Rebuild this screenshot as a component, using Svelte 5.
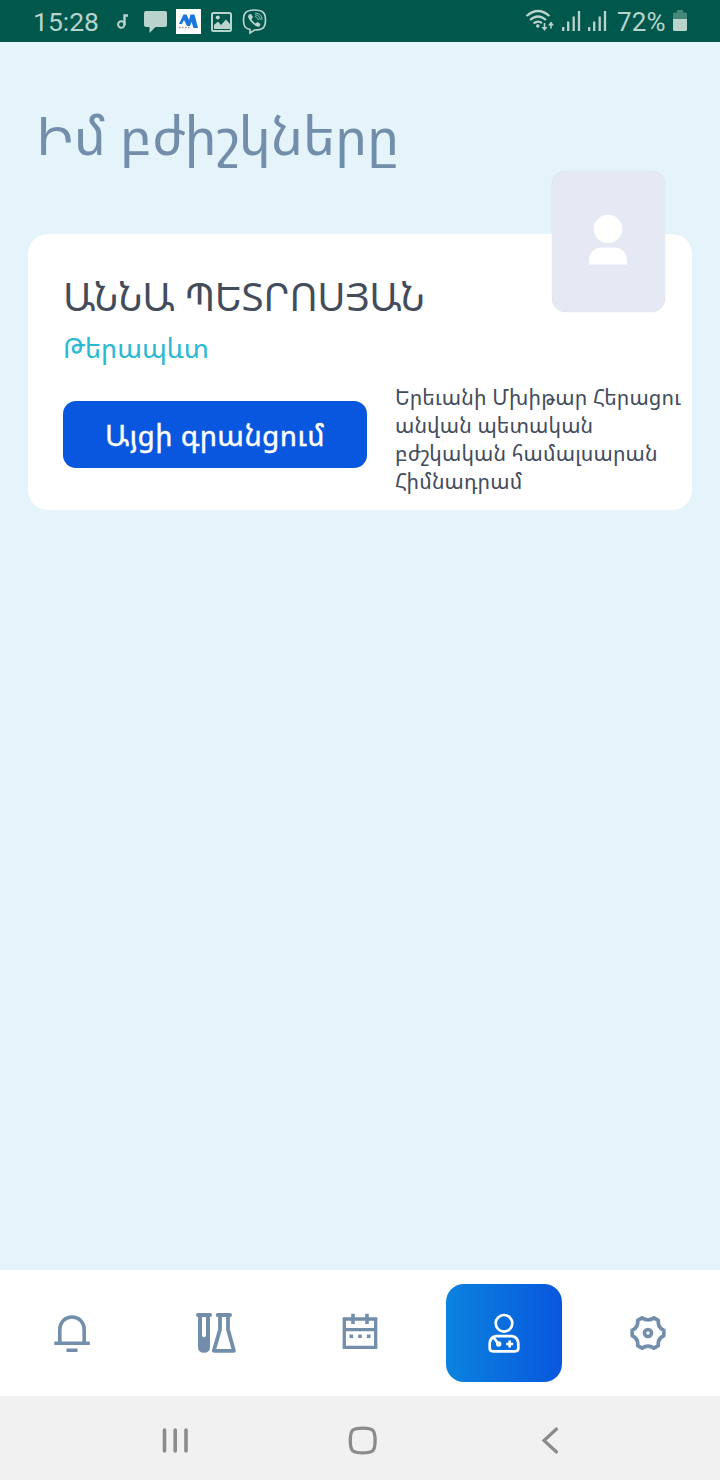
<script lang="ts">
  const title = 'Իմ բժիշկները';

  const doctor = {
    name: 'ԱՆՆԱ ՊԵՏՐՈՍՅԱՆ',
    specialty: 'Թերապևտ',
    clinic: ['Երեւանի Մխիթար Հերացու', 'անվան պետական', 'բժշկական համալսարան', 'Հիմնադրամ'],
  };

  const tabs = ['bell', 'lab', 'calendar', 'doctor', 'settings'];
  let active = $state('doctor');

  // six-toothed outline for the settings icon
  const gear =
    'M14 4.900 Q20 9 26 4.900 L30.300 7.400 Q29.500 14.500 35.800 17.300 V22.700 Q29.500 25.500 30.300 32.600 L26 35.100 Q20 31 14 35.100 L9.700 32.600 Q10.500 25.500 4.200 22.700 V17.300 Q10.500 14.500 9.700 7.400 Z';
</script>

<div class="screen">
  <header class="status">
    <span class="time">15:28</span>
    <svg class="notifications" width="152" height="42" viewBox="115 0 152 42">
      <g fill="none" stroke="#b9d3cd" stroke-width="2">
        <circle cx="121.300" cy="24.500" r="3.200" />
        <path d="M124.500 25 V15.500 H128" stroke-width="2.400" />
      </g>
      <path d="M146 11 H165 Q167 11 167 13 V25 Q167 27 165 27 H155.500 L149.500 33 V27 H146 Q144 27 144 25 V13 Q144 11 146 11 Z" fill="#b9d3cd" />
      <rect x="176" y="9" width="25" height="25" fill="#fff" />
      <path d="M179 24 L183.500 14.500 H186.500 L189 20 L190.500 14.500 H194.500 L198 28 H193.500 L191.500 22 L190 26 H187 L184 20 L182 24 Z" fill="#1976dc" />
      <path d="M179 27.500 H191" stroke="#8a9299" stroke-width="1.300" stroke-dasharray="1.500 1.500" />
      <rect x="212" y="13" width="19" height="18" rx="1.500" fill="none" stroke="#b9d3cd" stroke-width="2" />
      <circle cx="217.800" cy="17.500" r="2.100" fill="#b9d3cd" />
      <path d="M214 29 V25 L218 21.500 L221 25 L226 19.500 L230 24 V29 Z" fill="#b9d3cd" />
      <path d="M254.500 10 C263 10 265.500 13 265.500 20 C265.500 27.500 263 30 254.500 30 L250 33 V29.500 C245 28.500 243.500 26 243.500 20 C243.500 13 246 10 254.500 10 Z" fill="none" stroke="#b9d3cd" stroke-width="1.700" />
      <path d="M249 14.500 L251 14 L253 17 L251.500 19.500 Q253 22 255.500 23.500 L257.500 22 L260.500 24 L259.500 26.500 Q257 27.500 253 23.800 Q248 19 248 16 Z" fill="#b9d3cd" />
      <path d="M255 16.500 Q258 17 258.500 20 M255 14.800 Q260 15 260.300 20 M255 13 Q262 13 262 20" fill="none" stroke="#b9d3cd" stroke-width="0.800" />
    </svg>
    <svg class="signal" width="84" height="42" viewBox="524 0 84 42">
      <g fill="none" stroke="#b9d3cd" stroke-width="2.200">
        <path d="M526.500 16 Q538 6 549.500 16" />
        <path d="M530 20 Q538 13 546 20" />
        <path d="M533.500 23.500 Q538 20 542 23.200" />
      </g>
      <circle cx="537.800" cy="26" r="1.800" fill="#b9d3cd" />
      <path d="M544.500 23 V29 M551 28.500 V23" stroke="#b9d3cd" stroke-width="1.600" />
      <path d="M541.500 27 H547.500 L544.500 31 Z M548 25.500 H554 L551 21.500 Z" fill="#b9d3cd" />
      {#each [562, 588] as x}
        <path d="M{x + 1.2} 27 V31 M{x + 6.2} 21.500 V31 M{x + 11.7} 16.500 V31 M{x + 17} 11 V31" stroke="#b9d3cd" stroke-width="2.300" />
      {/each}
    </svg>
    <span class="percent">72%</span>
    <svg class="battery" width="14" height="42" viewBox="673 0 14 42">
      <path d="M677 10 H683 V12.500 H686 L687 13.500 V19 H673 V13.500 L674 12.500 H677 Z" fill="#458779" />
      <path d="M673 19 H687 V30 L686 31 H674 L673 30 Z" fill="#b9d3cd" />
    </svg>
  </header>

  <main>
    <h1>{title}</h1>

    <article class="card">
      <div class="avatar">
        <svg width="40" height="52" viewBox="0 0 40 52">
          <circle cx="20" cy="15" r="14.300" fill="#fff" />
          <path d="M1 50.500 V46 Q2 34 13 33.500 H27 Q38 34 39 46 V50.500 Z" fill="#fff" />
        </svg>
      </div>
      <h2>{doctor.name}</h2>
      <p class="specialty">{doctor.specialty}</p>
      <div class="row">
        <button class="book">Այցի գրանցում</button>
        <p class="clinic">
          {#each doctor.clinic as line}
            <span>{line}</span>
          {/each}
        </p>
      </div>
    </article>
  </main>

  <nav class="tabs">
    {#each tabs as tab}
      <button class="tab" class:active={tab === active} aria-label={tab} onclick={() => (active = tab)}>
        <svg width="44" height="44" viewBox="-2 -2 44 44" fill="none" stroke="currentColor">
          {#if tab === 'bell'}
            <path d="M7.800 30 V17 C7.800 -0.300 32.200 -0.300 32.200 17 V30" stroke-width="3.600" />
            <path d="M2.300 30.300 H37.800 M14.500 37.300 H25.500" stroke-width="3.500" />
          {:else if tab === 'lab'}
            <path d="M2 2 H14 M21.700 2 H34" stroke-width="4" stroke-linecap="round" />
            <path d="M2 3 H14 V34 Q14 39.800 8 39.800 Q2 39.800 2 34 Z M6 4 V23 Q8 25.600 10 23 V4 Z" stroke="none" fill="currentColor" fill-rule="evenodd" />
            <path d="M24 3 V16.500 L17.800 37.800 H37.900 L32 16.500 V3" stroke-width="3.800" stroke-linejoin="round" />
          {:else if tab === 'calendar'}
            <path d="M4.300 6 H35.700 V34.300 H4.300 Z M4.300 16.700 H35.700" stroke-width="3.300" />
            <path d="M13 0.700 V11 M27 0.700 V11" stroke-width="3.600" />
            <path d="M9.500 23.300 H13.100 M18.200 23.300 H21.800 M26.900 23.300 H30.500" stroke-width="3.600" />
          {:else if tab === 'doctor'}
            <circle cx="20" cy="10.300" r="8.300" stroke-width="2.700" />
            <path d="M12 23.100 H28 Q34.300 24.300 34.300 31.300 V35.300 Q34.300 38.300 31 38.300 H9 Q5.700 38.300 5.700 35.300 V31.300 Q5.700 24.300 12 23.100 Z" stroke-width="2.700" />
            <path d="M9.500 24.500 L14.500 31" stroke-width="2.700" />
            <circle cx="14.700" cy="31" r="2.700" fill="currentColor" stroke="none" />
            <path d="M22.200 31 H29.200 M25.700 27.500 V34.500" stroke-width="2.600" />
          {:else}
            <path d={gear} stroke-width="3.700" stroke-linejoin="round" />
            <circle cx="20" cy="20" r="3.500" stroke-width="3.700" />
          {/if}
        </svg>
      </button>
    {/each}
  </nav>

  <footer class="system">
    <svg width="30" height="30" viewBox="0 0 30 30" fill="none" stroke="#8b8b8b" stroke-width="3.600" stroke-linecap="round">
      <path d="M4.500 4 V25 M15.200 4 V25 M26 4 V25" />
    </svg>
    <svg width="30" height="30" viewBox="0.300 0.500 30 30" fill="none" stroke="#8b8b8b" stroke-width="3.300">
      <path d="M15 2.600 C25.500 2.600 27.400 4.500 27.400 15 C27.400 25.500 25.500 27.400 15 27.400 C4.500 27.400 2.600 25.500 2.600 15 C2.600 4.500 4.500 2.600 15 2.600 Z" />
    </svg>
    <svg width="30" height="30" viewBox="0 0.500 30 30" fill="none" stroke="#8b8b8b" stroke-width="3.200" stroke-linecap="round">
      <path d="M21.500 3.500 L9 15 L21.500 26.500" />
    </svg>
  </footer>
</div>

<style>
  :global(body) {
    margin: 0;
  }

  .screen {
    display: flex;
    flex-direction: column;
    width: 720px;
    height: 1480px;
    overflow: hidden;
    background: #e4f4fa;
    color: #434c5b;
    font-family: 'Noto Sans Armenian', 'DejaVu Sans', sans-serif;
  }

  h1,
  h2,
  p {
    margin: 0;
    font-weight: 400;
    white-space: nowrap;
  }

  .status {
    display: flex;
    align-items: center;
    flex: none;
    height: 42px;
    box-sizing: border-box;
    padding: 0 33px;
    background: #00574b;
    color: #b9d3cd;
    font: 26.5px/44px Roboto, sans-serif;
  }

  .time {
    width: 82px;
    padding-top: 2px;
  }

  .signal {
    margin-left: auto;
  }

  .percent {
    width: 56px;
    margin-left: 9px;
    padding-top: 2px;
    font-size: 26px;
    letter-spacing: 0.1px;
  }

  main {
    flex: 1;
    padding: 61px 28px 0;
  }

  h1 {
    height: 131px;
    padding-left: 8px;
    color: #738eab;
    font-size: 54px;
    line-height: 62px;
    letter-spacing: -0.2px;
    box-sizing: border-box;
  }

  .card {
    position: relative;
    height: 276px;
    box-sizing: border-box;
    padding: 38px 0 0 35px;
    border-radius: 20px;
    background: #fff;
  }

  .avatar {
    position: absolute;
    top: -63px;
    right: 27px;
    display: flex;
    justify-content: center;
    width: 113px;
    height: 141px;
    box-sizing: border-box;
    padding: 43px 2px 0 0;
    border-radius: 14px;
    background: #e4e9f3;
    box-shadow: 0 0 1px #c9ced8;
  }

  h2 {
    font-size: 39px;
    line-height: 48px;
    letter-spacing: -0.35px;
  }

  .specialty {
    margin-top: 12px;
    color: #2bb8d4;
    font-size: 27px;
    line-height: 32px;
  }

  .row {
    display: flex;
    align-items: flex-start;
    margin-top: 19px;
  }

  .book {
    flex: none;
    width: 304px;
    height: 67px;
    margin-top: 18px;
    padding: 0;
    border: 0;
    border-radius: 13px;
    background: #0957de;
    color: #fff;
    font: 29px/34px 'Noto Sans Armenian', 'DejaVu Sans', sans-serif;
    letter-spacing: 0.35px;
    -webkit-text-stroke: 0.4px #fff;
  }

  .clinic {
    display: flex;
    flex-direction: column;
    align-items: flex-start;
    margin-left: 28px;
    font-size: 21px;
    line-height: 28px;
    letter-spacing: 0.1px;
  }

  .tabs {
    display: grid;
    grid-template-columns: repeat(5, 144px);
    place-items: center;
    flex: none;
    height: 126px;
    background: #fff;
  }

  .tab {
    display: grid;
    place-items: center;
    width: 116px;
    height: 98px;
    padding: 0;
    border: 0;
    border-radius: 18px;
    background: none;
    color: #738eab;
  }

  .tab.active {
    background: linear-gradient(90deg, #0a83de, #0957de);
    color: #fff;
  }

  .system {
    display: flex;
    align-items: center;
    flex: none;
    justify-content: space-between;
    height: 84px;
    box-sizing: border-box;
    padding: 5px 155px 0 160px;
    background: #f1f1f1;
  }
</style>
